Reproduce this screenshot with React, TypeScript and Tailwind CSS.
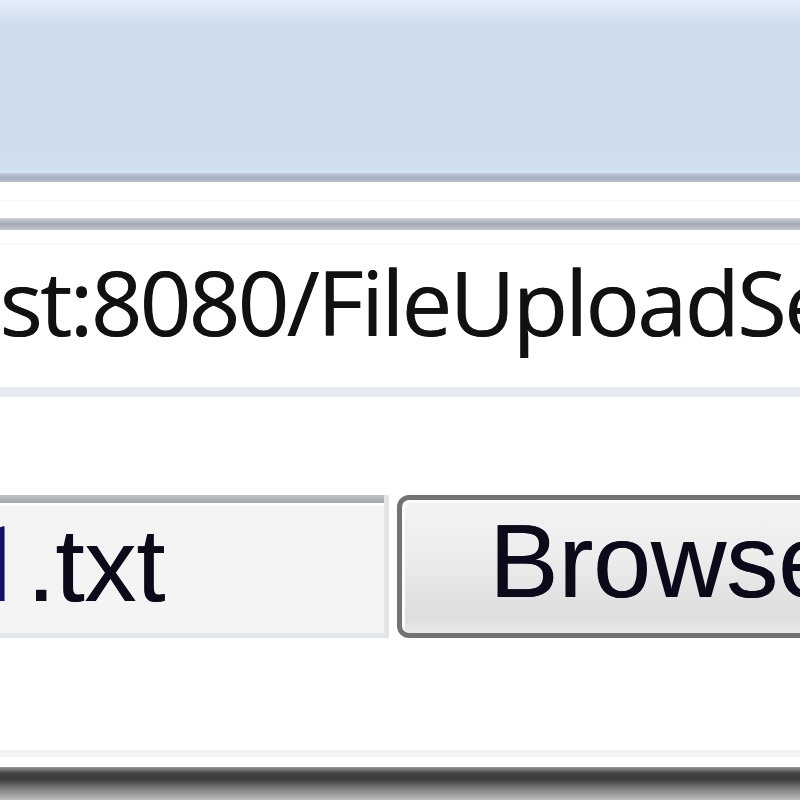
export default function App() {
  return (
    <div className="w-[800px] h-[800px] overflow-hidden bg-white flex flex-col">
      {/* window frame / title area */}
      <div className="h-[173px] shrink-0 bg-[linear-gradient(to_bottom,#e7f0fa_0px,#dbe6f3_12px,#cedded_24px,#cddcec_140px,#d2e1f1_172px)]" />
      <div className="h-[9px] shrink-0 bg-[linear-gradient(to_bottom,#c3ccdc,#a7afc2_50%,#b9bfcd)]" />
      <div className="h-[36px] shrink-0 bg-white flex flex-col justify-center">
        <div className="h-px bg-[#f7f7f8]" />
      </div>

      {/* address bar */}
      <div className="shrink-0 flex flex-col">
        <div className="h-[12px] bg-[linear-gradient(to_bottom,#d2d4d9,#a3a7b0_50%,#c3c7cf)]" />
        <div className="h-[157px] bg-white overflow-hidden pt-[26px]">
          <div className="h-px bg-[#f6f7f8] -mt-[12px] mb-[11px]" />
          <div
            className="whitespace-nowrap leading-none text-[90px] tracking-[-2.5px] text-[#111] ml-[-285px] [text-shadow:0.6px_0_0_#111]"
            style={{ fontFamily: '"Open Sans", "Noto Sans", sans-serif' }}
          >
            localhost:8080/FileUploadServlet
          </div>
        </div>
        <div className="h-[10px] bg-[#e7ebef]" />
      </div>

      <div className="h-[98px] shrink-0 bg-white" />

      {/* file input row */}
      <div className="h-[143px] shrink-0 flex gap-[8px]">
        <div className="w-[389px] shrink-0 flex flex-col border-r-[5px] border-[#e1e5e9]">
          <div className="h-[8px] bg-[linear-gradient(to_bottom,#bfc3c8,#a3a7ad)]" />
          <div className="flex-1 bg-[#f4f4f4] border-t-[3px] border-white border-b-[5px] border-b-[#e3e7eb] overflow-hidden pt-[7px]">
            <div
              className="whitespace-nowrap leading-none text-[104px] text-[#0a0a1a] ml-[-33px] [text-shadow:0.6px_0_0_#0a0a1a]"
              style={{ fontFamily: '"Liberation Sans", Arial, sans-serif' }}
            >
              <span className="mr-[1px] text-[#14106a]" style={{ fontFamily: 'Roboto, "Liberation Sans", sans-serif' }}>
                1
              </span>
              .txt
            </div>
          </div>
        </div>
        <div className="flex-1 min-w-[420px] rounded-[12px] border-[5px] border-[#737373] bg-[linear-gradient(to_bottom,#f3f3f3,#ececec_45%,#e3e3e3_70%,#dedede_88%,#e9e9e9)] shadow-[inset_3px_3px_0_#fbfbfb] overflow-hidden pt-[9px] pl-[87px]">
          <div
            className="whitespace-nowrap leading-none text-[104px] text-[#0a0a1a] [text-shadow:0.6px_0_0_#0a0a1a]"
            style={{ fontFamily: '"Liberation Sans", Arial, sans-serif' }}
          >
            Browse...
          </div>
        </div>
      </div>

      <div className="flex-1 bg-white flex flex-col justify-end">
        <div className="h-[7px] bg-[#f3f3f3] mb-[10px]" />
      </div>

      {/* bottom edge */}
      <div className="h-[33px] shrink-0 bg-[linear-gradient(to_bottom,#9a9a9a_0px,#454545_6px,#3b3b3b_12px,#7f7f7f_22px,#bdbdbd_33px)]" />
    </div>
  );
}
